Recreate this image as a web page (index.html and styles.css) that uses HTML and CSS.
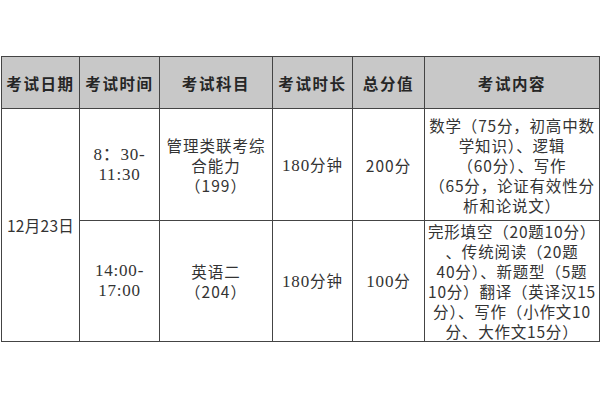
FILE: index.html
```html
<!DOCTYPE html>
<html lang="zh">
<head>
<meta charset="utf-8">
<link rel="stylesheet" href="styles.css">
</head>
<body>
<table class="exam">
  <colgroup>
    <col class="c-date"><col class="c-time"><col class="c-subj"><col class="c-dur"><col class="c-score"><col class="c-content">
  </colgroup>
  <thead>
    <tr>
      <th>考试日期</th><th>考试时间</th><th>考试科目</th><th>考试时长</th><th>总分值</th><th>考试内容</th>
    </tr>
  </thead>
  <tbody>
    <tr class="r1">
      <td class="date" rowspan="2">12月23日</td>
      <td class="num">8：30-<br>11:30</td>
      <td>管理类联考综<br>合能力<br>（199）</td>
      <td><span class="num">180</span>分钟</td>
      <td>200分</td>
      <td class="content">数学（75分，初高中数<br>学知识）、逻辑<br>（60分）、写作<br>（65分，论证有效性分<br>析和论说文）</td>
    </tr>
    <tr class="r2">
      <td class="num">14:00-<br>17:00</td>
      <td>英语二<br>（204）</td>
      <td><span class="num">180</span>分钟</td>
      <td><span class="num">100</span>分</td>
      <td class="content">完形填空（20题10分）<br>、传统阅读（20题<br>40分）、新题型（5题<br>10分）翻译（英译汉15<br>分）、写作（小作文10<br>分、大作文15分）</td>
    </tr>
  </tbody>
</table>
</body>
</html>
```

FILE: styles.css
```css
html, body {
  margin: 0;
  background: #fff;
}
body {
  padding: 56px 0 0 1px;
  font-family: "Noto Sans CJK SC", "Liberation Sans", sans-serif;
}
.exam {
  border-collapse: collapse;
  table-layout: fixed;
  width: 598px;
  color: #333;
  font-size: 15.5px;
  line-height: 20px;
  letter-spacing: 1px;
}
.c-date { width: 78px; }
.c-time { width: 80px; }
.c-subj { width: 113px; }
.c-dur { width: 80px; }
.c-score { width: 72px; }
.c-content { width: 175px; }
.exam th, .exam td {
  border: 1.5px solid #444;
  text-align: center;
  vertical-align: middle;
  padding: 0;
}
.exam th {
  background: #c8c8c8;
  height: 51px;
  font-weight: 700;
  font-size: 15.5px;
  color: #262626;
  letter-spacing: 1.6px;
}
.r1 td { height: 111px; }
.r2 td { height: 118px; }
.num {
  font-family: "Liberation Serif", "Noto Sans CJK SC", serif;
  font-size: 17px;
  line-height: 20px;
  letter-spacing: 0.8px;
}
.content {
  letter-spacing: 0.8px;
  white-space: nowrap;
}
.date {
  letter-spacing: 0.3px;
}
```
